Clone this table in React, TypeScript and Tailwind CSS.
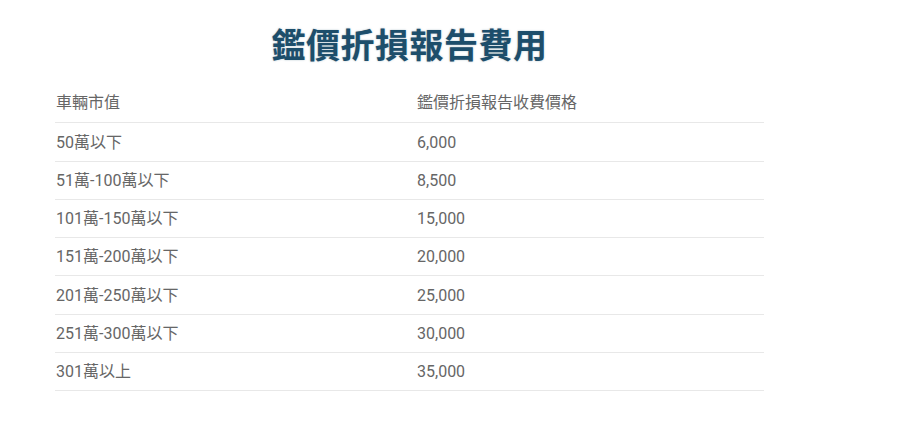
import React from "react";

const rows: [string, string, string][] = [
  ["50萬以下", "6,000", "h-[39px]"],
  ["51萬-100萬以下", "8,500", "h-[38px]"],
  ["101萬-150萬以下", "15,000", "h-[38px]"],
  ["151萬-200萬以下", "20,000", "h-[38px]"],
  ["201萬-250萬以下", "25,000", "h-[39px]"],
  ["251萬-300萬以下", "30,000", "h-[38px]"],
  ["301萬以上", "35,000", "h-[38px]"],
];

export default function App() {
  return (
    <div className="w-[914px] h-[425px] bg-white pl-[55px] pt-[19px]" style={{ fontFamily: "Roboto, 'Noto Sans CJK TC', sans-serif" }}>
      <div className="w-[709px]">
        <h1
          className="h-[50px] leading-[50px] text-center text-[34px] font-bold text-[#1d4e6b] tracking-[0.5px]"
          style={{ fontFamily: "'Noto Sans CJK TC', sans-serif", textShadow: "0 0 2px rgba(29,78,107,0.35)" }}
        >
          鑑價折損報告費用
        </h1>
        <div className="mt-[13px] text-[16px] text-[#666666]">
          <div className="flex h-[41px] items-center pt-[1px] border-b border-[#e8e8e8]">
            <div className="w-[362px] pl-[1px]">車輛市值</div>
            <div>鑑價折損報告收費價格</div>
          </div>
          {rows.map(([a, b, h]) => (
            <div key={a} className={`flex ${h} items-center pt-[1px] border-b border-[#e8e8e8]`}>
              <div className="w-[362px] pl-[1px]">{a}</div>
              <div>{b}</div>
            </div>
          ))}
        </div>
      </div>
    </div>
  );
}
